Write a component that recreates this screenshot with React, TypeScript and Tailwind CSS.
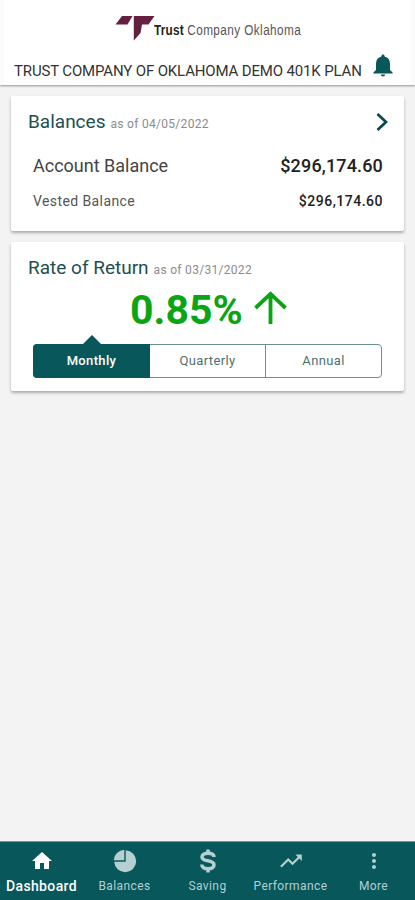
import type { ReactNode } from 'react';
import clsx from 'clsx';
import { MdHome, MdMoreVert, MdTrendingUp } from 'react-icons/md';

interface NavItemProps {
  label: string;
  icon: ReactNode;
  active?: boolean;
  labelClass: string;
}

function Logo() {
  return (
    <div className="flex items-start h-[46px] pl-[115px]">
      <svg className="w-10 h-[26px] mt-[15px] shrink-0" viewBox="0 0 40 26" fill="#651f3f">
        <path d="M7 1H17.5L12.5 9.5H0.5Z" />
        <path d="M18.8 1H39.5L33.5 9.5H27L25.5 18L18.8 25.5Z" />
      </svg>
      <div className="mt-[20px] -ml-px text-[14px] leading-5 whitespace-nowrap text-[#555] font-['Liberation_Sans',sans-serif] origin-left scale-x-[0.84]">
        <span className="font-bold text-[#222] tracking-[0.3px]">Trust</span> <span className="tracking-[0.5px]">Company Oklahoma</span>
      </div>
    </div>
  );
}

function BellIcon() {
  return (
    <svg className="w-5 h-[23px]" viewBox="0 0 20 23" fill="#07575b">
      <path d="M8.4 2.4C8.4 0 11.6 0 11.6 2.4C15.2 3.2 17 6 17 9.6V16L19.6 18.6V19.5H0.4V18.6L3 16V9.6C3 6 4.8 3.2 8.4 2.4Z" />
      <path d="M7.8 20.5H12.2C12.2 23 7.8 23 7.8 20.5Z" />
    </svg>
  );
}

function PieIcon() {
  return (
    <svg className="w-6 h-6" viewBox="0 0 24 24" fill="currentColor">
      <path d="M12.7 1.2V12.7H1.2A11 11 0 1 0 12.7 1.2Z" />
      <path d="M11.3 0.7V11.3H0.7A11 11 0 0 1 11.3 0.7Z" />
    </svg>
  );
}

function DollarIcon() {
  return (
    <svg className="w-[18px] h-6" viewBox="0 0 18 24" fill="none" stroke="currentColor" strokeWidth="3.5">
      <path d="M15 8C15 5.4 12.6 4.2 9 4.2C5.4 4.2 3 5.6 3 8C3 13.4 15 10.2 15 15.8C15 18.4 12.6 19.8 9 19.8C5.2 19.8 2.8 18.2 2.8 15.6" />
      <path d="M9 0.5V5M9 19V23.5" />
    </svg>
  );
}

function Card({ title, date, className, children }: { title: string; date: string; className: string; children: ReactNode }) {
  return (
    <section className={clsx('mx-[11px] bg-white rounded-[2px] shadow-[0_2px_3px_rgba(0,0,0,0.3)]', className)}>
      <h2 className="flex items-baseline gap-[5px] pl-[17px] pt-3 h-[52px] text-[19px] leading-7 text-[#1d4f52]">
        {title}
        <span className="text-[12px] tracking-[0.3px] text-[#8b8b8b]">{date}</span>
      </h2>
      {children}
    </section>
  );
}

function NavItem({ label, icon, active, labelClass }: NavItemProps) {
  return (
    <button className={clsx('w-[83px] flex flex-col items-center', active ? 'text-white' : 'text-[#b4d0d1]')}>
      <span className="h-9 flex items-center justify-center pt-px">{icon}</span>
      <span className={clsx('leading-4 whitespace-nowrap', labelClass)}>{label}</span>
    </button>
  );
}

export default function App() {
  return (
    <div className="h-[900px] w-[415px] flex flex-col overflow-hidden bg-[#f3f3f3] font-[Roboto,sans-serif]">
      <header className="h-[85px] shrink-0 bg-white border-x-4 border-[#fbfbfb] shadow-[0_1px_2px_rgba(0,0,0,0.4)]">
        <div className="-ml-1"><Logo /></div>
        <div className="flex items-center justify-between pl-[10px] pr-[18px]">
          <h1 className="pt-[12px] text-[15px] leading-[26px] tracking-[-0.15px] whitespace-nowrap text-[#333]">TRUST COMPANY OF OKLAHOMA DEMO 401K PLAN</h1>
          <BellIcon />
        </div>
      </header>

      <main className="flex-1 pt-[11px] flex flex-col gap-[11px]">
        <div className="relative">
          <Card title="Balances" date="as of 04/05/2022" className="h-[135px]">
            <div className="flex justify-between pl-[22px] pr-[21px] mt-[4px] text-[18px] leading-7 text-[#444]">
              <span>Account Balance</span>
              <span className="font-medium tracking-[0.15px] text-[#222]">$296,174.60</span>
            </div>
            <div className="flex justify-between pl-[22px] pr-[21px] mt-[9px] text-[14px] leading-6 text-[#555]">
              <span className="tracking-[0.4px]">Vested Balance</span>
              <span className="font-medium tracking-[0.5px] text-[#222]">$296,174.60</span>
            </div>
          </Card>
          <svg className="absolute right-[27px] top-[16px] w-3 h-[20px]" viewBox="0 0 12 20" fill="none" stroke="#07484e" strokeWidth="2.7">
            <path d="M1.5 2L10 10L1.5 18" />
          </svg>
        </div>

        <Card title="Rate of Return" date="as of 03/31/2022" className="h-[149px]">
          <div className="flex items-center h-9 -mt-[2px] pl-[119px] text-[#0ba514]">
            <span className="text-[41px] leading-9 font-bold">0.85%</span>
            <svg className="w-[33px] h-[34px] ml-[11px] -mt-1" viewBox="0 0 33 34" fill="none" stroke="currentColor" strokeWidth="3.8">
              <path d="M16.5 33V3M1.5 17L16.5 2.8L31.5 17" />
            </svg>
          </div>
          <div className="mx-[22px] mt-[16px] h-[34px] grid grid-cols-[116px_116px_1fr] border border-[#6c8f8d] rounded-[4px] text-[13px] tracking-[0.35px] text-[#50706f]">
            <button className="relative -my-px -ml-px rounded-l-[4px] bg-[#07575b] text-white font-medium">
              <span className="absolute left-1/2 -top-[9px] -ml-[9px] border-x-[9px] border-b-[9px] border-x-transparent border-b-[#07575b]" />
              Monthly
            </button>
            <button className="border-r border-[#6c8f8d]">Quarterly</button>
            <button>Annual</button>
          </div>
        </Card>
      </main>

      <nav className="h-[59px] shrink-0 flex bg-[#07575b] border-t border-[#78999b]">
        <NavItem active label="Dashboard" labelClass="text-[14px] font-medium tracking-[0.35px]" icon={<MdHome className="w-6 h-6" />} />
        <NavItem label="Balances" labelClass="text-[12px] tracking-[0.4px]" icon={<PieIcon />} />
        <NavItem label="Saving" labelClass="text-[12px] tracking-[0.4px]" icon={<DollarIcon />} />
        <NavItem label="Performance" labelClass="text-[12px] tracking-[0.4px]" icon={<MdTrendingUp className="w-[26px] h-[26px]" />} />
        <NavItem label="More" labelClass="text-[12px] tracking-[0.4px]" icon={<MdMoreVert className="w-6 h-6" />} />
      </nav>
    </div>
  );
}
